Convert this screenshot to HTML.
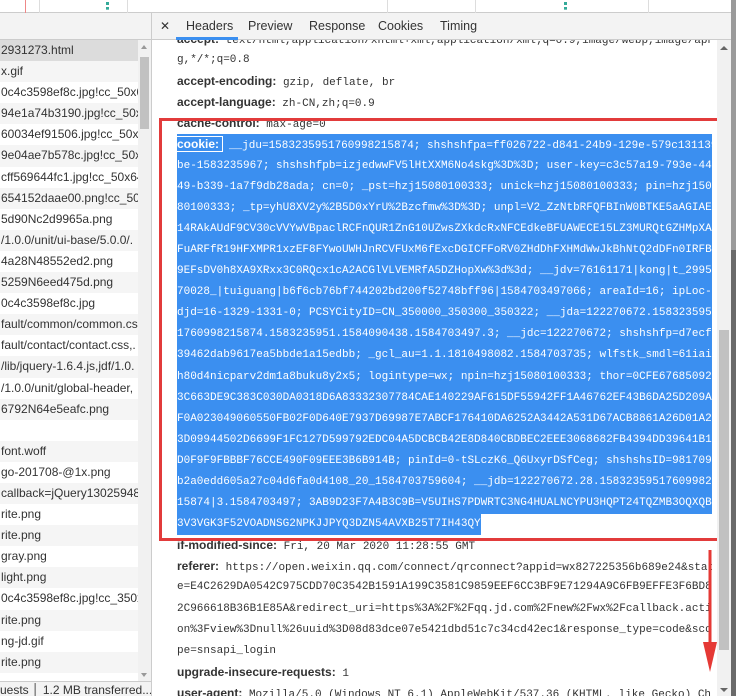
<!DOCTYPE html>
<html><head><meta charset="utf-8"><style>
*{margin:0;padding:0;box-sizing:border-box}
body{width:736px;height:696px;overflow:hidden;background:#fff;position:relative;font-family:"Liberation Sans",sans-serif;}
.top{position:absolute;left:0;top:0;width:736px;height:13px;background:#fff;border-bottom:1px solid #ccc}
.vl{position:absolute;top:0;height:13px;width:1px;background:#ddd}
.left{position:absolute;left:0;top:13px;width:152px;height:683px;background:#fff;border-right:1px solid #ccc;overflow:hidden}
.lhead{height:27px;background:#f3f3f3;border-bottom:1px solid #ccc}
.row{height:21.1px;line-height:21.1px;font-size:12px;color:#333;white-space:nowrap;overflow:hidden;width:138px;padding-left:1px}
.row:nth-child(even){background:#f5f5f5}
.row.sel{background:#dcdcdc}
.lsb{position:absolute;left:138px;top:27px;width:13px;height:641px;background:#f1f1f1}
.lthumb{position:absolute;left:2px;top:17px;width:9px;height:72px;background:#c1c1c1}
.foot{position:absolute;left:0;top:668px;width:152px;height:28px;background:#f3f3f3;border-top:1px solid #ccc;font-size:12px;color:#333;line-height:16px;white-space:nowrap;padding-left:0}
.tabs{position:absolute;left:152px;top:13px;width:584px;height:27px;background:#f3f3f3;border-bottom:1px solid #ccc;font-size:12.5px;color:#333}
.tabs span{position:absolute;top:6px}
.content{position:absolute;left:152px;top:40px;width:565px;height:656px;overflow:hidden}
.lines{position:absolute;left:25px;top:-0.5px;width:535px}
.ln{height:21.1px;line-height:21.1px;font-family:"Liberation Mono",monospace;font-size:11px;color:#333;white-space:nowrap;overflow:hidden}
.ln b{font-family:"Liberation Sans",sans-serif;font-size:12px;color:#333}
.hl{background:#3b8ff0;color:#fff}
.red{position:absolute;left:159px;top:118px;width:562px;height:423px;border:3px solid #e23b3b}
.rsb{position:absolute;left:717px;top:40px;width:14px;height:656px;background:#f1f1f1}
.rthumb{position:absolute;left:2px;top:290px;width:10px;height:320px;background:#c1c1c1}
</style></head><body>
<div class="top">
<div class="vl" style="left:25px;background:#e88"></div>
<div class="vl" style="left:39px"></div>
<div class="vl" style="left:127px"></div>
<div class="vl" style="left:387px"></div>
<div class="vl" style="left:475px"></div>
<div class="vl" style="left:648px"></div>
<div style="position:absolute;left:106px;top:2px;width:3px;height:8px;border-left:3px dotted #3a9"></div>
<div style="position:absolute;left:564px;top:2px;width:3px;height:8px;border-left:3px dotted #3a9"></div>
</div>
<div class="left">
<div class="lhead"></div>
<div>
<div class="row sel">2931273.html</div>
<div class="row">x.gif</div>
<div class="row">0c4c3598ef8c.jpg!cc_50x64</div>
<div class="row">94e1a74b3190.jpg!cc_50x64</div>
<div class="row">60034ef91506.jpg!cc_50x64</div>
<div class="row">9e04ae7b578c.jpg!cc_50x64</div>
<div class="row">cff569644fc1.jpg!cc_50x64</div>
<div class="row">654152daae00.png!cc_50x64</div>
<div class="row">5d90Nc2d9965a.png</div>
<div class="row">/1.0.0/unit/ui-base/5.0.0/.</div>
<div class="row">4a28N48552ed2.png</div>
<div class="row">5259N6eed475d.png</div>
<div class="row">0c4c3598ef8c.jpg</div>
<div class="row">fault/common/common.css</div>
<div class="row">fault/contact/contact.css,.</div>
<div class="row">/lib/jquery-1.6.4.js,jdf/1.0.</div>
<div class="row">/1.0.0/unit/global-header,</div>
<div class="row">6792N64e5eafc.png</div>
<div class="row">&nbsp;</div>
<div class="row">font.woff</div>
<div class="row">go-201708-@1x.png</div>
<div class="row">callback=jQuery13025948</div>
<div class="row">rite.png</div>
<div class="row">rite.png</div>
<div class="row">gray.png</div>
<div class="row">light.png</div>
<div class="row">0c4c3598ef8c.jpg!cc_350x</div>
<div class="row">rite.png</div>
<div class="row">ng-jd.gif</div>
<div class="row">rite.png</div>
</div>
<div class="lsb"><div style="position:absolute;left:3px;top:5px;border:3.5px solid transparent;border-bottom:4px solid #999;border-top:0"></div><div class="lthumb"></div><div style="position:absolute;left:3px;bottom:4px;border:3.5px solid transparent;border-top:4px solid #999;border-bottom:0"></div></div>
<div class="foot">uests &#x2502; 1.2 MB transferred...</div>
</div>
<div class="tabs">
<span style="left:8px;font-size:12px">✕</span>
<span style="left:34px">Headers</span>
<span style="left:96px">Preview</span>
<span style="left:157px">Response</span>
<span style="left:226px">Cookies</span>
<span style="left:288px">Timing</span>
<div style="position:absolute;left:24px;top:24px;width:62px;height:3px;background:#3b8ff0"></div>
</div>
<div class="content">
<div class="lines" style="top:-11px">
<div class="ln"><b>accept:</b> text/html,application/xhtml+xml,application/xml;q=0.9,image/webp,image/apn</div>
<div class="ln">g,*/*;q=0.8</div>
<div class="ln"><b>accept-encoding:</b> gzip, deflate, br</div>
<div class="ln"><b>accept-language:</b> zh-CN,zh;q=0.9</div>
<div class="ln"><b>cache-control:</b> max-age=0</div>
<div class="ln hl"><b style="color:#fff;outline:1px solid #fff">cookie: </b>&nbsp;__jdu=1583235951760998215874; shshshfpa=ff026722-d841-24b9-129e-579c131139</div>
<div class="ln hl">be-1583235967; shshshfpb=izjedwwFV5lHtXXM6No4skg%3D%3D; user-key=c3c57a19-793e-44</div>
<div class="ln hl">49-b339-1a7f9db28ada; cn=0; _pst=hzj15080100333; unick=hzj15080100333; pin=hzj150</div>
<div class="ln hl">80100333; _tp=yhU8XV2y%2B5D0xYrU%2Bzcfmw%3D%3D; unpl=V2_ZzNtbRFQFBInW0BTKE5aAGIAE</div>
<div class="ln hl">14RAkAUdF9CV30cVVYwVBpaclRCFnQUR1ZnG10UZwsZXkdcRxNFCEdkeBFUAWECE15LZ3MURQtGZHMpXA</div>
<div class="ln hl">FuARFfR19HFXMPR1xzEF8FYwoUWHJnRCVFUxM6fExcDGICFFoRV0ZHdDhFXHMdWwJkBhNtQ2dDFn0IRFB</div>
<div class="ln hl">9EFsDV0h8XA9XRxx3C0RQcx1cA2ACGlVLVEMRfA5DZHopXw%3d%3d; __jdv=76161171|kong|t_2995</div>
<div class="ln hl">70028_|tuiguang|b6f6cb76bf744202bd200f52748bff96|1584703497066; areaId=16; ipLoc-</div>
<div class="ln hl">djd=16-1329-1331-0; PCSYCityID=CN_350000_350300_350322; __jda=122270672.158323595</div>
<div class="ln hl">1760998215874.1583235951.1584090438.1584703497.3; __jdc=122270672; shshshfp=d7ecf</div>
<div class="ln hl">39462dab9617ea5bbde1a15edbb; _gcl_au=1.1.1810498082.1584703735; wlfstk_smdl=61iai</div>
<div class="ln hl">h80d4nicparv2dm1a8buku8y2x5; logintype=wx; npin=hzj15080100333; thor=0CFE67685092</div>
<div class="ln hl">3C663DE9C383C030DA0318D6A83332307784CAE140229AF615DF55942FF1A46762EF43B6DA25D209A</div>
<div class="ln hl">F0A023049060550FB02F0D640E7937D69987E7ABCF176410DA6252A3442A531D67ACB8861A26D01A2</div>
<div class="ln hl">3D09944502D6699F1FC127D599792EDC04A5DCBCB42E8D840CBDBEC2EEE3068682FB4394DD39641B1</div>
<div class="ln hl">D0F9F9FBBBF76CCE490F09EEE3B6B914B; pinId=0-tSLczK6_Q6UxyrDSfCeg; shshshsID=981709</div>
<div class="ln hl">b2a0edd605a27c04d6fa0d4108_20_1584703759604; __jdb=122270672.28.15832359517609982</div>
<div class="ln hl">15874|3.1584703497; 3AB9D23F7A4B3C9B=V5UIHS7PDWRTC3NG4HUALNCYPU3HQPT24TQZMB3OQXQB</div>
<div class="ln"><span class="hl" style="display:inline-block;height:21.1px">3V3VGK3F52VOADNSG2NPKJJPYQ3DZN54AVXB25T7IH43QY</span></div>
<div class="ln"><b>if-modified-since:</b> Fri, 20 Mar 2020 11:28:55 GMT</div>
<div class="ln"><b>referer:</b> https://open.weixin.qq.com/connect/qrconnect?appid=wx827225356b689e24&amp;state</div>
<div class="ln">e=E4C2629DA0542C975CDD70C3542B1591A199C3581C9859EEF6CC3BF9E71294A9C6FB9EFFE3F6BD8</div>
<div class="ln">2C966618B36B1E85A&amp;redirect_uri=https%3A%2F%2Fqq.jd.com%2Fnew%2Fwx%2Fcallback.action</div>
<div class="ln">on%3Fview%3Dnull%26uuid%3D08d83dce07e5421dbd51c7c34cd42ec1&amp;response_type=code&amp;scope</div>
<div class="ln">pe=snsapi_login</div>
<div class="ln"><b>upgrade-insecure-requests:</b> 1</div>
<div class="ln"><b>user-agent:</b> Mozilla/5.0 (Windows NT 6.1) AppleWebKit/537.36 (KHTML, like Gecko) Chr</div>
</div>
</div>
<div class="red"></div>
<div class="rsb"><div style="position:absolute;left:3px;top:6px;border:4px solid transparent;border-bottom:4px solid #666;border-top:0"></div><div class="rthumb"></div><div style="position:absolute;left:3px;bottom:4px;border:4px solid transparent;border-top:4px solid #666;border-bottom:0"></div></div>
<div style="position:absolute;left:731px;top:0;width:5px;height:696px;background:#6a6a6a"></div>
<div style="position:absolute;left:731px;top:0;width:5px;height:250px;background:#9a9a9a"></div>
<svg style="position:absolute;left:698px;top:548px" width="24" height="126"><line x1="12" y1="2" x2="12" y2="100" stroke="#e53935" stroke-width="3"/><polygon points="5,94 19,94 12,124" fill="#e53935"/></svg>
</body></html>
